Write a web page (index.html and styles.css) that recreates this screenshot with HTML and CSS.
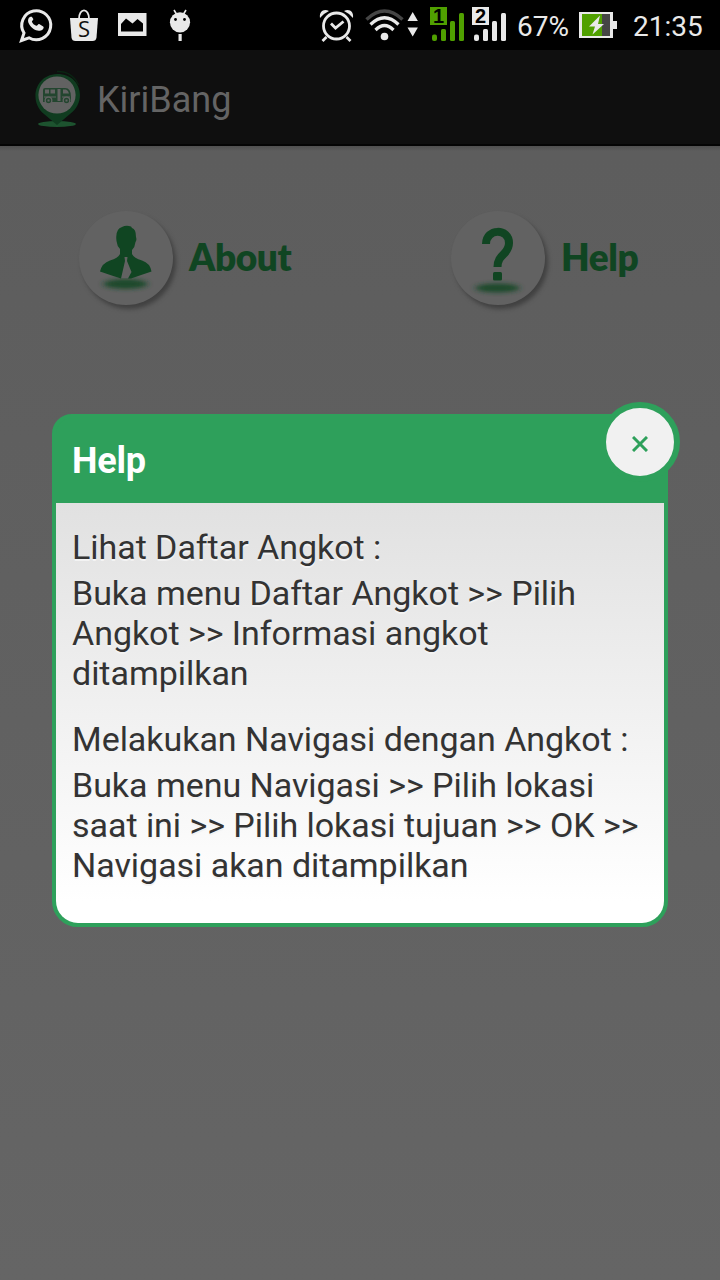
FILE: index.html
```html
<!DOCTYPE html>
<html lang="id">
<head>
<meta charset="utf-8">
<title>KiriBang</title>
<link rel="stylesheet" href="styles.css">
</head>
<body>
<div class="status">
  <svg class="notifications" width="240" height="50" viewBox="0 0 240 50" fill="#e9e9e9">
    <path d="M21.500 40.500 24 33A14.500 14.500 0 1 1 29 37.800Z" fill="none" stroke="#e9e9e9" stroke-width="3"/>
    <path d="M30.500 16.800c-2.600.8-3.200 4.500-1.300 7.500 3 4.900 7.700 7.400 11.700 6.100 2.300-.8 3.500-3 2.300-4l-4-2.300c-1.200-.5-1.800 2.100-3 1.700-2-.8-3.600-2.300-4.300-4.100-.2-.9 1.700-1.500 1.400-2.700l-1.500-2.200Z"/>
    <path d="M70 18H98L96.500 37.500Q96 41 92.500 41H75.500Q72 41 71.500 37.500Z"/>
    <path d="M79 19C79 7.500 89 7.500 89 19" fill="none" stroke="#e9e9e9" stroke-width="1.800"/>
    <text class="shop-letter" x="84" y="36.500" text-anchor="middle">S</text>
    <path fill-rule="evenodd" d="M118 13H146.500V36H118ZM121 31.500H143V23.500L137.500 19 132.500 23.500 126 18.500 121 24Z"/>
    <path d="M174 10 177 15M186 10 183 15" stroke="#e9e9e9" stroke-width="1.600"/>
    <circle cx="180" cy="22.300" r="10.100"/>
    <circle cx="175.500" cy="19.500" r="1.400" fill="#000"/><circle cx="184.500" cy="19.500" r="1.400" fill="#000"/>
    <path d="M178.500 34H181.700V41H178.500Z"/>
  </svg>
  <svg class="signals" width="200" height="50" viewBox="310 0 200 50" fill="#e9e9e9">
    <g fill="none" stroke="#e9e9e9" stroke-width="2.800">
      <circle cx="336.500" cy="26" r="13"/>
      <path d="M331 23.500 335.500 28 343.500 21.500M326.500 37 322.500 41M346.500 37 350.500 41"/>
    </g>
    <path d="M320 18C319 11 324 8.500 329 11Q323.500 13.500 320 18ZM353 18C354 11 349 8.500 344 11Q349.500 13.500 353 18Z"/>
    <path d="M366.500 19.500Q384.500 2.500 402.500 19.500" fill="none" stroke="#454545" stroke-width="3.500"/>
    <g fill="none" stroke="#e9e9e9" stroke-width="3.200">
      <path d="M370.500 24.500Q384.500 11 398.500 24.500M375.500 30Q384.500 21 393.500 30"/>
    </g>
    <circle cx="384.500" cy="36.500" r="3.800"/>
    <path d="M407.500 21 412.700 12 417.900 21ZM407.500 27.500 412.700 36.500 417.900 27.500Z"/>
    <g fill="#50a000">
      <path d="M430 7H447V25H430Z"/>
      <rect x="432" y="34.500" width="5" height="6.500" rx="2"/><rect x="441" y="29" width="5" height="12" rx="1.500"/><rect x="450" y="21" width="5" height="20" rx="1.500"/><rect x="459" y="13" width="5" height="28" rx="1.500"/>
    </g>
    <path d="M472 7H489V25H472Z"/>
    <rect x="474" y="34.500" width="5" height="6.500" rx="2"/><rect x="483" y="29" width="5" height="12" rx="1.500"/><rect x="492" y="21" width="5" height="20" rx="1.500"/><rect x="501" y="13" width="5" height="28" rx="1.500"/>
    <text class="sim" x="438.500" y="23" text-anchor="middle">1</text>
    <text class="sim" x="480.500" y="23" text-anchor="middle">2</text>
  </svg>
  <span class="percent">67%</span>
  <svg class="battery" width="38" height="26" viewBox="579 12 38 26">
    <path fill="#e9e9e9" d="M579 12H613V21H617V29H613V38H579Z"/>
    <path fill="#50a000" d="M582 14H602V36H582Z"/><path fill="#454545" d="M602 14H610V36H602Z"/>
    <path fill="#e9e9e9" d="M600 15.500 589 26.500H595L592.500 34.500 604 24H598Z"/>
  </svg>
  <span class="clock">21:35</span>
</div>
<header class="appbar">
  <svg class="logo" width="48" height="60" viewBox="33 68 48 60">
    <ellipse cx="57" cy="123" rx="19" ry="3" fill="#1d532f"/>
    <path fill="#103c20" d="M57 124 44 113C29 101 34 74 57 73C82 73 87 101 70 113Z"/>
    <path d="M57 70.500Q72 70 78.500 84" fill="none" stroke="#0a2412" stroke-width="1.300"/>
    <circle cx="57" cy="94" r="18.600" fill="#626262"/>
    <path fill="#23452f" d="M43 89Q43 87 45 87H65Q71 87 71 96V101H43Z"/>
    <path fill="#626262" d="M45 88.500H49V92.500H45ZM50.500 88.500H55V92.500H50.500ZM57.500 88H60.500V100H57.500ZM63 88.500H66Q68.500 89.500 69 92.500H63ZM44 95.500H56V96.500H44ZM62 95.500H70V96.500H62Z"/>
    <g fill="#23452f" stroke="#626262" stroke-width="1.300"><circle cx="48.500" cy="99.500" r="3.300"/><circle cx="66.500" cy="99.500" r="3.300"/></g>
    <path d="M47.500 99.500H49.500M65.500 99.500H67.500" stroke="#626262" stroke-width="2"/>
  </svg>
  <h1 class="app-title">KiriBang</h1>
</header>
<main class="page">
  <nav class="menu">
    <a class="item">
      <span class="disc"><svg width="94" height="94" viewBox="79 211 94 94">
        <defs><filter id="soft" x="-30%" y="-100%" width="160%" height="300%"><feGaussianBlur stdDeviation="3.200 2"/></filter></defs>
        <ellipse cx="125.500" cy="284" rx="22" ry="5" fill="#1a4a2a" filter="url(#soft)"/>
        <path fill="#104522" d="M120 254V249Q117 246 116.500 241Q115 229 122 227Q126 225 131 226.500L132 228Q136 229 136 237Q137 240 135.500 242Q135 247 132 250V254Q134 258 142 260.500Q150 263 151.500 271.500Q141 275 131 278.500H121Q110 275 100 271.500Q102 263 110 260.500Q118 258 120 254Z"/>
        <path fill="#626262" d="M121 278.500 125 261 124.500 257H127.500L127 261 131.500 272 128 278.500Z"/>
      </svg></span>
      <span class="label">About</span>
    </a>
    <a class="item">
      <span class="disc"><svg width="94" height="94" viewBox="451 211 94 94">
        <ellipse cx="497.500" cy="288" rx="22" ry="4.500" fill="#1a4a2a" filter="url(#soft)"/>
        <path d="M486 244C486 228 509 228 509 243C509 255 497.500 254 497.500 267" fill="none" stroke="#104522" stroke-width="8"/>
        <rect x="493" y="272" width="9" height="8.500" rx="1.500" fill="#104522"/>
      </svg></span>
      <span class="label">Help</span>
    </a>
  </nav>
  <section class="dialog">
    <h2 class="dialog-title">Help</h2>
    <button class="close" aria-label="Tutup"><svg width="16" height="16" viewBox="0 0 16 16"><path d="M1 1 15 15M15 1 1 15" stroke="#2ea05b" stroke-width="3"/></svg></button>
    <div class="dialog-body">
      <h3 class="topic">Lihat Daftar Angkot :</h3>
      <p class="steps">Buka menu Daftar Angkot &gt;&gt; Pilih<br>Angkot &gt;&gt; Informasi angkot<br>ditampilkan</p>
      <h3 class="topic">Melakukan Navigasi dengan Angkot :</h3>
      <p class="steps">Buka menu Navigasi &gt;&gt; Pilih lokasi<br>saat ini &gt;&gt; Pilih lokasi tujuan &gt;&gt; OK &gt;&gt;<br>Navigasi akan ditampilkan</p>
    </div>
  </section>
</main>
</body>
</html>
```
FILE: styles.css
```css
* { box-sizing: border-box; }
body {
  margin: 0;
  width: 720px;
  height: 1280px;
  display: flex;
  flex-direction: column;
  overflow: hidden;
  font-family: Roboto, sans-serif;
  background: #646464;
}
svg { display: block; flex: none; }
.status {
  height: 50px;
  display: flex;
  align-items: center;
  background: #000;
  color: #e9e9e9;
  font-size: 28px;
  line-height: 50px;
  white-space: nowrap;
}
.signals { margin-left: 70px; }
.percent { width: 62px; margin-left: 7px; padding-top: 3px; }
.clock { margin-left: 16px; padding-top: 3px; }
.shop-letter { font: 22px "Open Sans", sans-serif; fill: #111; }
.sim { font: bold 20px "Liberation Sans", sans-serif; fill: #000; }
.appbar {
  height: 96px;
  padding-left: 33px;
  display: flex;
  align-items: center;
  background: #0f0f0f;
  border-bottom: 2px solid #050505;
}
.logo { margin-top: 3px; }
.app-title {
  margin: 5px 0 0 16px;
  font-size: 36px;
  font-weight: 400;
  color: #646464;
}
.page {
  flex: 1;
  display: flex;
  flex-direction: column;
  background: linear-gradient(#505050, #5d5d5d 5px, #5d5d5d 12px, #656565);
}
.menu {
  height: 268px;
  padding: 65px 0 0 79px;
  display: grid;
  grid-template-columns: 372px 1fr;
}
.item { display: flex; height: 94px; align-items: center; }
.disc {
  width: 94px;
  height: 94px;
  border-radius: 50%;
  background: #626262;
  box-shadow: 3px 4px 4px #414141;
}
.label {
  margin: 0 0 3px 16px;
  font: 800 37px Lato, sans-serif;
  letter-spacing: -0.4px;
  color: #104522;
}
.dialog {
  position: relative;
  width: 616px;
  height: 513px;
  margin-left: 52px;
  display: flex;
  flex-direction: column;
  border: 4px solid #2ea05b;
  border-radius: 20px 20px 26px 26px;
  background: #2ea05b;
}
.dialog-title {
  height: 85px;
  margin: 0;
  padding-left: 16px;
  font-size: 36px;
  line-height: 86px;
  letter-spacing: -0.2px;
  color: #fff;
}
.close {
  position: absolute;
  top: -16px;
  right: -16px;
  width: 80px;
  height: 80px;
  padding: 4px 0 0;
  display: grid;
  place-items: center;
  border: 6px solid #2ea05b;
  border-radius: 50%;
  background: #f1f1f1;
}
.dialog-body {
  flex: 1;
  padding: 24px 16px 0;
  border-radius: 0 0 22px 22px;
  background: linear-gradient(#e1e1e1, #fff 95%);
  color: #333;
  text-shadow: 0 2px 0 #f3f3f3;
  font-size: 34px;
  line-height: 40px;
  letter-spacing: -0.04px;
  white-space: nowrap;
}
.topic { margin: 0 0 6px; font-size: inherit; font-weight: 400; }
.steps { margin: 0 0 26px; }
.steps:last-child { margin-bottom: 0; }
```
